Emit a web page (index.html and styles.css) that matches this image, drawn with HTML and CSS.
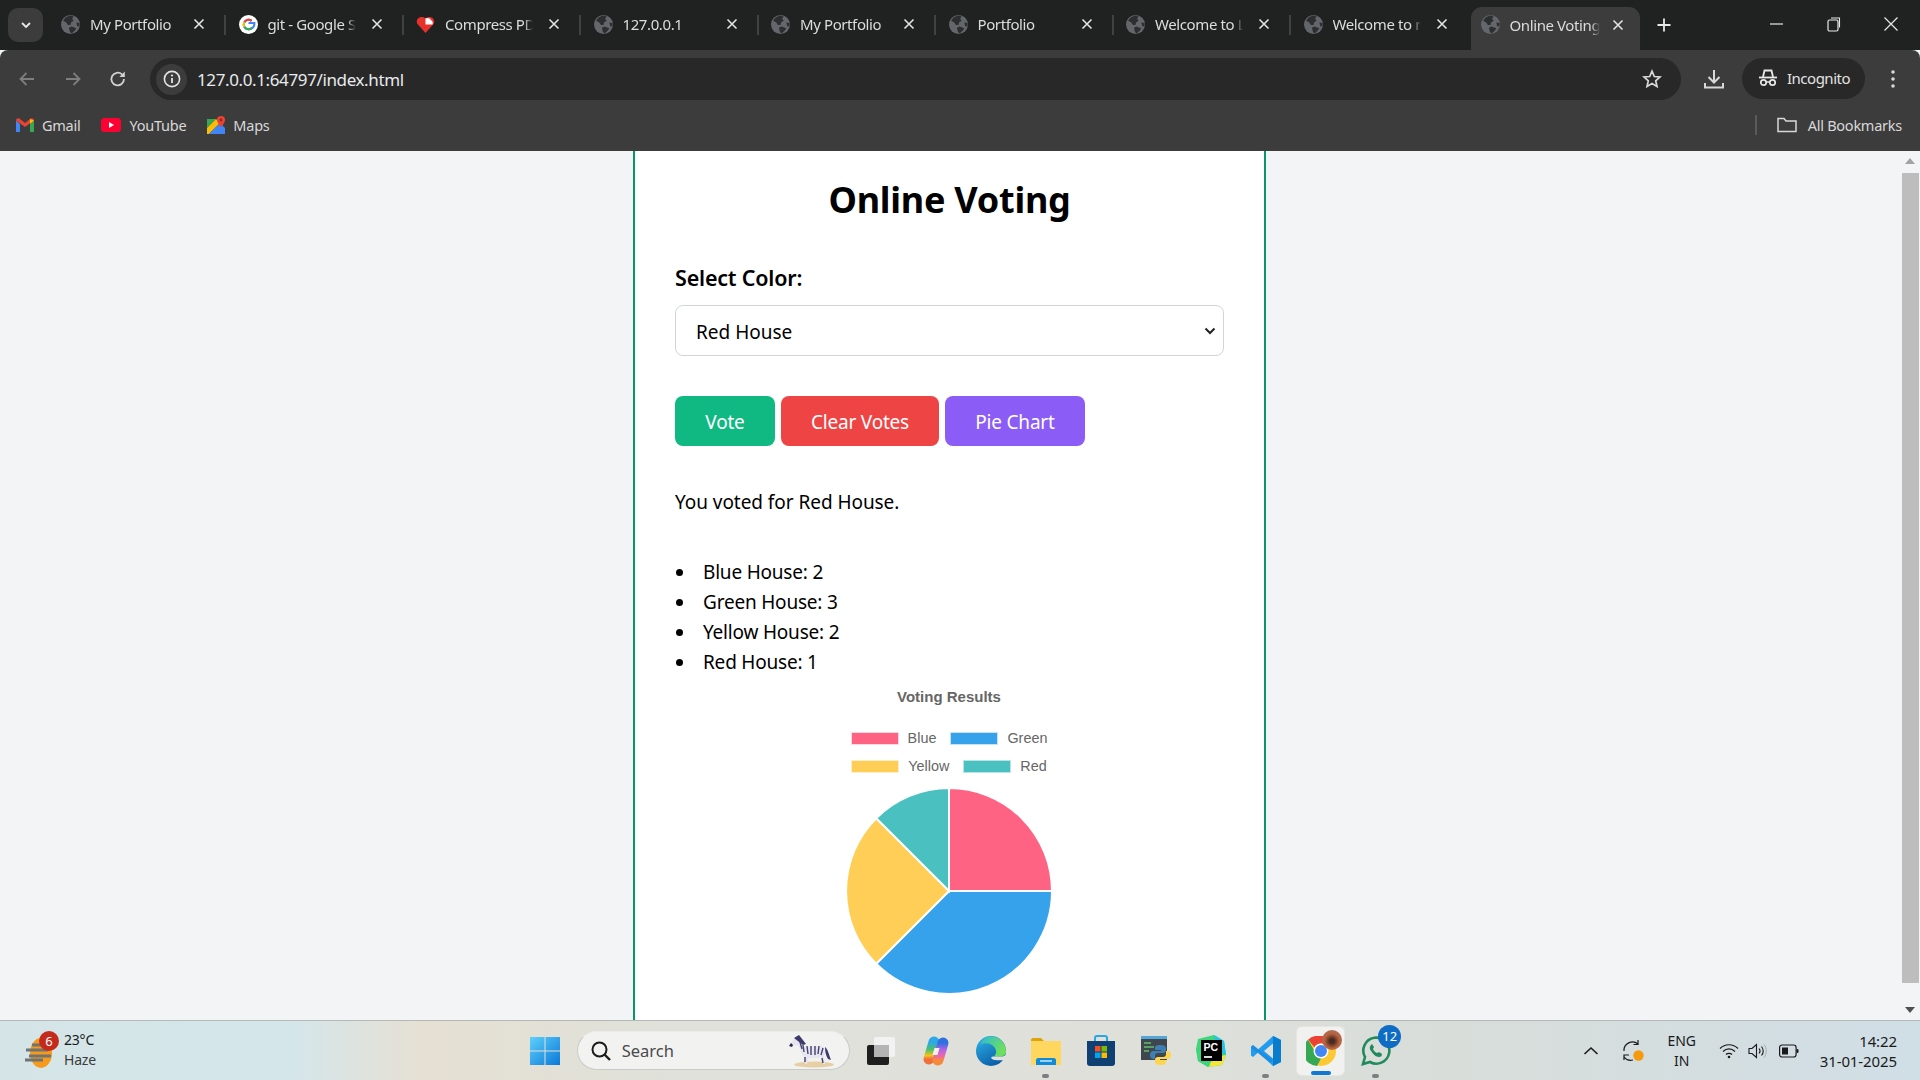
FILE: index.html
```html
<!DOCTYPE html>
<html lang="en">
<head>
  <meta charset="UTF-8" />
  <title>Online Voting</title>
  <link rel="stylesheet" href="styles.css">
</head>
<body>
<svg class="defs" width="0" height="0">
  <symbol id="globe" viewBox="0 0 18 18">
    <circle cx="9" cy="9" r="9" fill="#63666b"/>
    <path d="M9 0.5C6 1 3 3 2 5.5L5 7l1.500 2.500L9 9.500 9.500 7 12 5.500 10.500 3.500 12 1.500ZM10 11l-2.500 1 1 4 1.500 1.500 3-2.500 1.500-2.500ZM14.500 7l3 .5v3l-2 .5Z" fill="#2c2e30"/>
  </symbol>
  <symbol id="close" viewBox="0 0 12 12">
    <path d="M1.500 1.500l9 9M10.500 1.500l-9 9" stroke="#e3e3e3" stroke-width="1.600" fill="none"/>
  </symbol>
</svg>

<!-- tab strip -->
<div class="tabstrip">
  <div class="tabmenu">
    <svg width="12" height="8" viewBox="0 0 12 8"><path d="M2 2l4 4 4-4" stroke="#e8e8e8" stroke-width="1.800" fill="none"/></svg>
  </div>
  <div class="tab">
    <svg class="favicon"><use href="#globe"/></svg><span class="tab-title">My Portfolio</span><svg class="tab-x"><use href="#close"/></svg>
  </div>
  <div class="tab">
    <svg class="favicon" viewBox="0 0 20 20"><circle cx="10" cy="10" r="10" fill="#fff"/><path d="M10 8.500h6.200c.4 3.800-2.200 6.500-6.200 6.500a5 5 0 1 1 3.300-8.800" fill="none" stroke="#4285f4" stroke-width="2.200"/><path d="M5.600 7.400A5 5 0 0 1 13.300 6.200" fill="none" stroke="#ea4335" stroke-width="2.200"/><path d="M5.600 7.400a5 5 0 0 0 0 5.200" fill="none" stroke="#fbbc05" stroke-width="2.200"/><path d="M5.600 12.600A5 5 0 0 0 13.600 13.500" fill="none" stroke="#34a853" stroke-width="2.200"/></svg><span class="tab-title">git - Google Search</span><svg class="tab-x"><use href="#close"/></svg>
  </div>
  <div class="tab">
    <svg class="favicon" viewBox="0 0 20 20"><path d="M10 19L1.500 9.500C-1 5 4 -0.500 10 3.500 16 -0.500 21 5 18.500 9.500Z" fill="#e5322d"/><path d="M10 3.500h4l3.500 3.500v3h-7.500z" fill="#fff"/></svg><span class="tab-title">Compress PDF</span><svg class="tab-x"><use href="#close"/></svg>
  </div>
  <div class="tab">
    <svg class="favicon"><use href="#globe"/></svg><span class="tab-title">127.0.0.1</span><svg class="tab-x"><use href="#close"/></svg>
  </div>
  <div class="tab">
    <svg class="favicon"><use href="#globe"/></svg><span class="tab-title">My Portfolio</span><svg class="tab-x"><use href="#close"/></svg>
  </div>
  <div class="tab">
    <svg class="favicon"><use href="#globe"/></svg><span class="tab-title">Portfolio</span><svg class="tab-x"><use href="#close"/></svg>
  </div>
  <div class="tab">
    <svg class="favicon"><use href="#globe"/></svg><span class="tab-title">Welcome to LMS</span><svg class="tab-x"><use href="#close"/></svg>
  </div>
  <div class="tab tab-last">
    <svg class="favicon"><use href="#globe"/></svg><span class="tab-title">Welcome to my</span><svg class="tab-x"><use href="#close"/></svg>
  </div>
  <div class="tab tab-active">
    <svg class="favicon"><use href="#globe"/></svg><span class="tab-title">Online Voting</span><svg class="tab-x"><use href="#close"/></svg>
  </div>
  <svg class="newtab" width="16" height="16" viewBox="0 0 16 16"><path d="M8 1.500v13M1.500 8h13" stroke="#e8e8e8" stroke-width="1.800"/></svg>
  <div class="winctrls">
    <svg width="16" height="16" viewBox="0 0 16 16"><path d="M1 8h13" stroke="#e8e8e8" stroke-width="1.200"/></svg>
    <svg width="16" height="16" viewBox="0 0 16 16"><rect x="2" y="4" width="10" height="11" rx="1.500" fill="none" stroke="#e8e8e8" stroke-width="1.200"/><path d="M5 2h8.500v9.500" fill="none" stroke="#e8e8e8" stroke-width="1.100"/></svg>
    <svg width="16" height="16" viewBox="0 0 16 16"><path d="M1.500 1.500l13 13M14.500 1.500l-13 13" stroke="#e8e8e8" stroke-width="1.200"/></svg>
  </div>
</div>

<!-- toolbar -->
<div class="toolbar">
  <svg class="nav-btn" width="20" height="20" viewBox="0 0 20 20"><path d="M17 10H4M9.500 4L3.500 10l6 6" stroke="#7e7e7e" stroke-width="1.800" fill="none"/></svg>
  <svg class="nav-btn" width="20" height="20" viewBox="0 0 20 20"><path d="M3 10h13M10.500 4l6 6-6 6" stroke="#7e7e7e" stroke-width="1.800" fill="none"/></svg>
  <svg class="nav-btn" width="20" height="20" viewBox="0 0 20 20"><path d="M16 10a6.300 6.300 0 1 1-2-4.600L16 7.300" stroke="#d0d0d0" stroke-width="1.800" fill="none"/><path d="M16.800 2.500v5.500h-5.500z" fill="#d0d0d0"/></svg>
  <div class="omnibox">
    <div class="site-info">
      <svg width="18" height="18" viewBox="0 0 18 18"><circle cx="9" cy="9" r="7.600" fill="none" stroke="#e3e3e3" stroke-width="1.600"/><path d="M9 8v5" stroke="#e3e3e3" stroke-width="1.800"/><circle cx="9" cy="5.500" r="1.100" fill="#e3e3e3"/></svg>
    </div>
    <span class="url">127.0.0.1:64797/index.html</span>
    <svg class="star" width="20" height="20" viewBox="0 0 20 20"><path d="M10 2.200l2.300 5.300 5.700.5-4.300 3.800 1.300 5.600-5-3-5 3 1.300-5.600L2 8l5.700-.5z" fill="none" stroke="#d8d8d8" stroke-width="1.700"/></svg>
  </div>
  <svg class="download" width="22" height="22" viewBox="0 0 22 22"><path d="M11 2v12M5.500 9l5.500 5.500L16.500 9" stroke="#d8d8d8" stroke-width="2" fill="none"/><path d="M2 15v4.500h18V15" stroke="#d8d8d8" stroke-width="2" fill="none"/></svg>
  <div class="incognito">
    <svg width="20" height="18" viewBox="0 0 20 18"><path d="M5 8l1.500-6.500h7L15 8" fill="none" stroke="#e8e8e8" stroke-width="1.800"/><path d="M1 8.500h18" stroke="#e8e8e8" stroke-width="1.800"/><circle cx="5.500" cy="13.500" r="2.700" fill="none" stroke="#e8e8e8" stroke-width="1.700"/><circle cx="14.500" cy="13.500" r="2.700" fill="none" stroke="#e8e8e8" stroke-width="1.700"/><path d="M8 13h4" stroke="#e8e8e8" stroke-width="1.500"/></svg>
    <span>Incognito</span>
  </div>
  <svg class="kebab" width="6" height="20" viewBox="0 0 6 20"><circle cx="3" cy="3" r="1.800" fill="#d8d8d8"/><circle cx="3" cy="10" r="1.800" fill="#d8d8d8"/><circle cx="3" cy="17" r="1.800" fill="#d8d8d8"/></svg>
</div>

<!-- bookmarks -->
<div class="bookmarks">
  <div class="bookmark">
    <svg width="18" height="14" viewBox="0 0 18 14"><path d="M0 2.500V14h4V6z" fill="#4285f4"/><path d="M14 6v8h4V2.500z" fill="#34a853"/><path d="M0 2.500L9 9l9-6.500C18 .5 15.500-.5 14 1L9 5 4 1C2.500-.5 0 .5 0 2.500z" fill="#ea4335"/><path d="M14 1l4 1.500L14 6z" fill="#fbbc05"/></svg>
    <span>Gmail</span>
  </div>
  <div class="bookmark">
    <svg width="20" height="14" viewBox="0 0 20 14"><rect width="20" height="14" rx="3.500" fill="#ff0033"/><path d="M8 4l5 3-5 3z" fill="#fff"/></svg>
    <span>YouTube</span>
  </div>
  <div class="bookmark">
    <svg width="18" height="18" viewBox="0 0 18 18"><path d="M0 3h9L0 12z" fill="#34a853"/><path d="M0 12L9 3l4 4L2 18H0z" fill="#fbbc05"/><path d="M2 18L13 7l5 5v6z" fill="#4285f4"/><path d="M14 0a4 4 0 0 0-4 4c0 3 4 7 4 7s4-4 4-7a4 4 0 0 0-4-4z" fill="#ea4335"/><circle cx="14" cy="4" r="1.400" fill="#8a2a22"/></svg>
    <span>Maps</span>
  </div>
  <div class="all-bookmarks">
    <svg width="20" height="16" viewBox="0 0 20 16"><path d="M1 14.500V1.500h6l2 2.500h10v10.500z" fill="none" stroke="#d8d8d8" stroke-width="1.500"/></svg>
    <span>All Bookmarks</span>
  </div>
</div>

<!-- page -->
<div class="page">
  <div class="viewport">
    <div class="container">
      <h1>Online Voting</h1>
      <label class="field-label" for="house">Select Color:</label>
      <select id="house" class="house-select">
        <option>Red House</option>
        <option>Blue House</option>
        <option>Green House</option>
        <option>Yellow House</option>
      </select>
      <div class="btn-row">
        <button class="btn btn-vote">Vote</button>
        <button class="btn btn-clear">Clear Votes</button>
        <button class="btn btn-chart">Pie Chart</button>
      </div>
      <p class="message">You voted for Red House.</p>
      <ul class="results">
        <li>Blue House: 2</li>
        <li>Green House: 3</li>
        <li>Yellow House: 2</li>
        <li>Red House: 1</li>
      </ul>
      <div class="chart">
        <div class="chart-title">Voting Results</div>
        <div class="legend-row">
          <span class="swatch swatch-blue"></span><span class="legend-text">Blue</span>
          <span class="swatch swatch-green"></span><span class="legend-text">Green</span>
        </div>
        <div class="legend-row">
          <span class="swatch swatch-yellow"></span><span class="legend-text">Yellow</span>
          <span class="swatch swatch-red"></span><span class="legend-text">Red</span>
        </div>
        <svg class="pie" width="208" height="208" viewBox="-104 -104 208 208">
          <g stroke="#fff" stroke-width="2">
            <path d="M0 0V-103A103 103 0 0 1 103 0Z" fill="#ff6384"/>
            <path d="M0 0H103A103 103 0 0 1 -72.800 72.800Z" fill="#36a2eb"/>
            <path d="M0 0L-72.800 72.800A103 103 0 0 1 -72.800 -72.800Z" fill="#ffce56"/>
            <path d="M0 0L-72.800 -72.800A103 103 0 0 1 0 -103Z" fill="#4bc0c0"/>
          </g>
        </svg>
      </div>
    </div>
  </div>
  <div class="scrollbar">
    <span class="arrow-up"></span>
    <div class="thumb"></div>
    <span class="arrow-down"></span>
  </div>
</div>

<!-- taskbar -->
<div class="taskbar">
  <div class="weather">
    <div class="weather-icon">
      <svg width="32" height="36" viewBox="0 0 32 36"><ellipse cx="17" cy="20" rx="11" ry="15" fill="#f59a1b"/><path d="M8 12h16M2 17h22M5 23h22M1 27h18" stroke="#6f7375" stroke-width="3.200"/></svg>
      <span class="badge">6</span>
    </div>
    <div class="weather-text">
      <div>23°C</div>
      <div class="haze">Haze</div>
    </div>
  </div>

  <div class="task-center">
    <div class="task-item task-start">
      <svg width="30" height="30" viewBox="0 0 30 30"><defs><linearGradient id="win" x1="0" y1="0" x2="1" y2="1"><stop offset="0" stop-color="#5fd0fb"/><stop offset="1" stop-color="#0a78d8"/></linearGradient></defs><path d="M0 1h14.500v13.500H0zM15.500 1H30v13.500H15.500zM0 15.500h14.500V29H0zM15.500 15.500H30V29H15.500z" fill="url(#win)"/></svg>
    </div>
    <div class="searchbox">
      <svg width="22" height="22" viewBox="0 0 22 22"><circle cx="9.500" cy="9.500" r="7" fill="none" stroke="#1c1c1c" stroke-width="2"/><path d="M14.500 14.500l5.500 5.500" stroke="#1c1c1c" stroke-width="2.400"/></svg>
      <span>Search</span>
      <svg class="zebra" width="48" height="36" viewBox="0 0 48 36"><ellipse cx="27" cy="31.500" rx="20" ry="3" fill="#e6cfa4"/><path d="M38 14c3 2 4 8 6 13l-3-1c-2-3-3-7-3-12z" fill="#3c3a6a"/><path d="M17 14l16-1c4 0 5 3 5 6l-1 4 1 8h-2l-2-7-4 1h-8l-2 6h-2l-1-7c-3-3-4-7-5-11l-4-1-3 2-2-2 4-6 4-2 3 2z" fill="#e6e5f0"/><path d="M7 5l5-3 7 9-3 1z" fill="#3c3a6a"/><path d="M2 13l3 1 1-2-2-2z" fill="#2c2a50"/><path d="M13 9l2 7M16 12l1 7M20 13l1 8M24 13v9M28 13v9M32 13l-1 8M36 15l-2 7M18 24v5M35 25l1 5" stroke="#45426e" stroke-width="1.400"/></svg>
    </div>
    <div class="task-item">
      <svg width="30" height="30" viewBox="0 0 30 30"><rect x="1" y="9" width="22" height="20" rx="2" fill="#1f1f1f"/><rect x="8" y="1" width="21" height="20" rx="2" fill="#f4f4f4" fill-opacity=".88"/><rect x="8" y="9" width="15" height="12" fill="#b4b4b4"/></svg>
    </div>
    <div class="task-item">
      <svg width="32" height="32" viewBox="0 0 32 32"><defs><linearGradient id="cop1" x1="0" y1="0" x2="0" y2="1"><stop offset="0" stop-color="#2aa8e8"/><stop offset=".45" stop-color="#4dc16a"/><stop offset=".8" stop-color="#f5c21c"/><stop offset="1" stop-color="#f0703c"/></linearGradient><linearGradient id="cop2" x1="0" y1="0" x2="0" y2="1"><stop offset="0" stop-color="#2f6fe0"/><stop offset=".4" stop-color="#b065e6"/><stop offset=".8" stop-color="#ee6aa0"/><stop offset="1" stop-color="#f58a3c"/></linearGradient></defs><path d="M14 7L9 24" stroke="url(#cop1)" stroke-width="11" stroke-linecap="round" fill="none"/><path d="M18 25L23 8" stroke="url(#cop2)" stroke-width="11" stroke-linecap="round" fill="none"/><path d="M14.500 13h5l-2 7h-5z" fill="#fbeee8"/></svg>
    </div>
    <div class="task-item">
      <svg width="32" height="32" viewBox="0 0 32 32"><defs><linearGradient id="edge1" x1="0" y1="0" x2=".6" y2="1"><stop offset="0" stop-color="#2fb5e8"/><stop offset="1" stop-color="#0a5ea8"/></linearGradient><linearGradient id="edge2" x1="0" y1="0" x2="1" y2=".4"><stop offset="0" stop-color="#2cb8d8"/><stop offset="1" stop-color="#6fe05c"/></linearGradient></defs><circle cx="16" cy="16" r="15" fill="url(#edge1)"/><path d="M12 2A15 15 0 0 1 31 17c0 3-3 4.500-6 4.500h-6c2-2 3-5 1-8.500-3-5-10-6-15-3 1-4 4-7 7-8z" fill="url(#edge2)"/><path d="M32 19c-2 2-4 2.500-7 2.500h-7c-3 0-2 3 2 3.500 4 .5 8 .5 12-1z" fill="#dfe0da"/></svg>
    </div>
    <div class="task-item has-dot">
      <svg width="32" height="30" viewBox="0 0 32 30"><path d="M1 4c0-1 1-2 2-2h8l3 3h-13z" fill="#dfa30a"/><rect x="1" y="5" width="30" height="24" fill="#ffd75e"/><path d="M6 29v-5c0-1 1-2 2-2h16c1 0 2 1 2 2v5z" fill="#0f8bd9"/><path d="M10 25h12" stroke="#cfe9f9" stroke-width="1.500"/></svg>
    </div>
    <div class="task-item">
      <svg width="30" height="32" viewBox="0 0 30 32"><path d="M9 7V3c0-1 1-2 2-2h8c1 0 2 1 2 2v4" fill="none" stroke="#2aa7e0" stroke-width="2"/><path d="M1 6h28v22c0 2-1 3-3 3H4c-2 0-3-1-3-3z" fill="#103f73"/><rect x="9" y="11" width="5.500" height="5.500" fill="#f25022"/><rect x="15.500" y="11" width="5.500" height="5.500" fill="#7fba00"/><rect x="9" y="17.500" width="5.500" height="5.500" fill="#00a4ef"/><rect x="15.500" y="17.500" width="5.500" height="5.500" fill="#ffb900"/></svg>
    </div>
    <div class="task-item">
      <svg width="30" height="30" viewBox="0 0 30 30"><rect x="0" y="0" width="26" height="24" fill="#40464d"/><rect x="0" y="0" width="26" height="3" fill="#52a6d8"/><path d="M3 7h7M3 11h10M3 15h5" stroke="#5fc06b" stroke-width="1.300"/><path d="M19 9c-4 0-5 1-5 3v2h6v1h-8c-2 0-3 2-3 4s1 4 3 4h2v-3c0-2 1-3 3-3h5c2 0 3-1 3-3v-2c0-2-2-3-6-3z" fill="#3d7eb3"/><path d="M20 29c4 0 5-1 5-3v-2h-6v-1h8c2 0 3-2 3-4s-1-4-3-4h-2v3c0 2-1 3-3 3h-5c-2 0-3 1-3 3v2c0 2 2 3 6 3z" fill="#fdd64f"/></svg>
    </div>
    <div class="task-item">
      <svg width="30" height="32" viewBox="0 0 30 32"><path d="M2 4L18 0l10 6 2 14-4 10-14 2L2 26 0 14z" fill="#3ed67a"/><path d="M18 0l10 6 2 14-8-4z" fill="#20c4e8"/><path d="M30 20l-4 10-14 2 6-10z" fill="#f5e73a"/><path d="M0 14l8-8 6 24-2 2-10-6z" fill="#3ed67a"/><rect x="5" y="5" width="21" height="21" fill="#000"/><text x="7.500" y="16" class="pc-text">PC</text><path d="M8 22h8" stroke="#fff" stroke-width="1.700"/></svg>
    </div>
    <div class="task-item has-dot">
      <svg width="30" height="30" viewBox="0 0 30 30"><path d="M22 0l8 4v22l-8 4L7 16.500 2 21l-2-1.500V10.500L2 9l5 4.500z" fill="#1f9cf0"/><path d="M22 7.500L13 15l9 7.500z" fill="#e0e1dc"/><path d="M22 0l8 4v22l-8 4z" fill="#0a7ccd"/><path d="M2 9l20 15-2 3L0 12z" fill="#1a86d6" fill-opacity=".6"/></svg>
    </div>
    <div class="task-item task-active">
      <svg width="30" height="30" viewBox="0 0 30 30"><circle cx="15" cy="15" r="15" fill="#fcc934"/><path d="M15 0a15 15 0 0 1 13 7.500H15A7.500 7.500 0 0 0 8.500 11.250L2 3.800A15 15 0 0 1 15 0z" fill="#ea4335"/><path d="M2 3.800l6.500 11.200A7.500 7.500 0 0 0 15 22.500L11 30A15 15 0 0 1 2 3.800z" fill="#34a853"/><circle cx="15" cy="15" r="7.500" fill="#fff"/><circle cx="15" cy="15" r="6" fill="#4285f4"/></svg>
      <span class="avatar"></span>
    </div>
    <div class="task-item has-dot">
      <svg width="30" height="30" viewBox="0 0 30 30"><path d="M2 28l2-7A13 13 0 1 1 9 26z" fill="none" stroke="#1f8a5b" stroke-width="2.600"/><path d="M10 9c-1 1-2 3 0 6 2 3 5 6 8 6 2 0 3-1 3-3l-3-2-2 1c-2-1-3-2-4-4l1-2-2-3z" fill="#1f8a5b"/></svg>
      <span class="count">12</span>
    </div>
  </div>

  <div class="tray">
    <svg class="tray-chevron" width="16" height="10" viewBox="0 0 16 10"><path d="M1.500 8L8 2l6.500 6" fill="none" stroke="#1a1a1a" stroke-width="1.600"/></svg>
    <svg class="tray-sync" width="22" height="22" viewBox="0 0 22 22"><path d="M1 11A8.500 8.500 0 0 1 15 4M1 17a8.500 8.500 0 0 0 9 3" fill="none" stroke="#1a1a1a" stroke-width="1.200"/><path d="M15 0v4.500h-4.500M1 20v-5h5" fill="none" stroke="#1a1a1a" stroke-width="1.200"/><circle cx="15.500" cy="15.500" r="5.200" fill="#f59a0c"/></svg>
    <div class="lang">ENG<br>IN</div>
    <svg class="tray-wifi" width="20" height="16" viewBox="0 0 20 16"><path d="M1 5.500c5-5 13-5 18 0M4 8.500c3.500-3.500 8.500-3.500 12 0M7 11.500c1.500-1.500 4.500-1.500 6 0" fill="none" stroke="#1a1a1a" stroke-width="1.200"/><circle cx="10" cy="14" r="1.300" fill="#1a1a1a"/></svg>
    <svg class="tray-sound" width="20" height="16" viewBox="0 0 20 16"><path d="M1 5.500v5h3l4.500 4V1.500L4 5.500z" fill="none" stroke="#1a1a1a" stroke-width="1.100"/><path d="M11 5.500c1.300 1.500 1.300 3.500 0 5M13.500 3.500c2.300 2.500 2.300 6.500 0 9" fill="none" stroke="#1a1a1a" stroke-width="1.100"/><path d="M16 1.500c3 3.500 3 9.500 0 13" fill="none" stroke="#a8acae" stroke-width="1"/></svg>
    <svg class="tray-battery" width="20" height="14" viewBox="0 0 20 14"><rect x=".6" y="1" width="16.500" height="12" rx="2.500" fill="none" stroke="#1a1a1a" stroke-width="1.200"/><rect x="3" y="3.500" width="6" height="7" fill="#1a1a1a"/><rect x="17.500" y="5" width="2" height="4" rx="1" fill="#1a1a1a"/></svg>
    <div class="clock">14:22<br>31-01-2025</div>
  </div>
</div>
</body>
</html>
```

FILE: styles.css
```css
* { box-sizing: border-box; }
html, body { margin: 0; padding: 0; height: 100%; overflow: hidden; }
body { width: 1920px; height: 1080px; display: flex; flex-direction: column; font-family: "Noto Sans", "Open Sans", sans-serif; background: #f3f4f6; }
.defs { position: absolute; }

/* tab strip */
.tabstrip { height: 50px; background: #202222; display: flex; align-items: flex-end; padding-left: 8px; flex-shrink: 0; }
.tabmenu { width: 35px; height: 34px; margin: 0 5.500px 8px 0; background: #3c3c3c; border-radius: 10px; display: flex; align-items: center; justify-content: center; }
.tab { width: 177.500px; height: 50px; padding: 0 16px 2px 12.500px; display: flex; align-items: center; color: #dcdcdc; font-size: 15px; position: relative; }
.tab::after { content: ""; position: absolute; right: 0; top: 15px; height: 20px; width: 2px; background: #3f4142; }
.tab-last::after { display: none; }
.favicon { width: 19px; height: 19px; flex-shrink: 0; }
.tab-title { width: 88px; margin-left: 10px; white-space: nowrap; overflow: hidden; -webkit-mask-image: linear-gradient(to right, #000 90%, transparent 100%); mask-image: linear-gradient(to right, #000 90%, transparent 100%); letter-spacing: -0.4px; }
.tab-x { width: 12px; height: 12px; margin-left: 15px; flex-shrink: 0; }
.tab-active { width: 169px; height: 43px; margin-left: 2px; padding: 0 9px 8px 10px; background: #3c3c3c; border-radius: 11px 11px 0 0; }
.tab-active::after { display: none; }
.tab-active .tab-title { width: 90px; }
.tab-active .tab-x { margin-left: 12px; }
.newtab { margin: 0 0 17px 16px; }
.winctrls { margin-left: auto; display: flex; gap: 41px; padding-right: 21px; align-self: flex-start; margin-top: 16px; }

/* toolbar */
.toolbar { height: 50px; background: #3c3c3c; border-radius: 8px 8px 0 0; display: flex; align-items: flex-start; padding: 8px 0 0 17px; flex-shrink: 0; }
.nav-btn { margin: 11px 25.500px 0 0; }
.nav-btn:nth-child(3) { margin-right: 22px; }
.omnibox { width: 1531px; height: 42px; background: #282828; border-radius: 21px; display: flex; align-items: center; padding: 0 19px 0 6px; }
.site-info { width: 31px; height: 31px; border-radius: 50%; background: #3c3c3c; display: flex; align-items: center; justify-content: center; margin-right: 10px; }
.url { color: #e8eaed; font-size: 17px; letter-spacing: -0.38px; }
.star { margin-left: auto; }
.download { margin: 10px 17px 0 22px; }
.incognito { width: 123px; height: 41px; background: #282828; border-radius: 21px; display: flex; align-items: center; gap: 9px; padding: 0 0 1px 16px; color: #e3e3e3; font-size: 15px; letter-spacing: -0.5px; }
.kebab { margin: 11px 0 0 25px; }

/* bookmarks */
.bookmarks { height: 51px; background: #3c3c3c; display: flex; align-items: center; padding: 0 18px 2px 16px; color: #d8d8d8; font-size: 14.500px; letter-spacing: -0.25px; flex-shrink: 0; }
.bookmark { display: flex; align-items: center; gap: 8px; margin-right: 21px; }
.all-bookmarks { margin-left: auto; display: flex; align-items: center; gap: 11px; border-left: 2px solid #5a5a5a; padding-left: 20px; height: 20px; }

/* page */
.page { flex: 1; display: flex; min-height: 0; }
.viewport { flex: 1; overflow: hidden; display: flex; justify-content: center; }
.container { width: 633px; margin-right: 1px; background: #fff; border-left: 2px solid #059669; border-right: 2px solid #059669; padding: 21px 40px 0; color: #000; }
h1 { margin: 0; text-align: center; font-size: 36px; line-height: 56px; font-weight: 700; letter-spacing: -0.25px; }
.field-label { display: block; margin-top: 35px; font-size: 21.500px; line-height: 30px; font-weight: 600; letter-spacing: -0.2px; }
.house-select { display: block; width: 100%; height: 51px; margin-top: 12px; padding: 2px 20px 0; border: 1px solid #d1d5db; border-radius: 8px; font-family: inherit; font-size: 19px; color: #000; appearance: none; background: #fff url("data:image/svg+xml,%3Csvg xmlns='http://www.w3.org/2000/svg' width='12' height='8'%3E%3Cpath d='M1.500 1.500L6 6l4.500-4.500' fill='none' stroke='%23222' stroke-width='2'/%3E%3C/svg%3E") no-repeat right 7px center; }
.btn-row { display: flex; gap: 6px; margin-top: 40px; }
.btn { height: 50px; padding: 2px 0 0; border: 0; border-radius: 8px; color: #fff; font-family: inherit; font-size: 19px; letter-spacing: -0.2px; }
.btn-vote { width: 100px; background: #10b981; }
.btn-clear { width: 158px; background: #ef4444; }
.btn-chart { width: 140px; background: #8b5cf6; }
.message { margin: 41px 0 0; font-size: 19px; line-height: 30px; letter-spacing: -0.05px; }
.results { margin: 40px 0 0; padding: 0; list-style: none; font-size: 19px; line-height: 30px; letter-spacing: -0.2px; }
.results li { display: flex; align-items: center; }
.results li::before { content: ""; width: 7px; height: 7px; margin: 0 20px 0 1px; border-radius: 50%; background: #000; }

/* chart */
.chart { display: flex; flex-direction: column; align-items: center; font-family: "Liberation Sans", Arial, sans-serif; color: #666; font-size: 14.400px; margin-top: 10px; padding-right: 1px; }
.chart-title { font-size: 15px; font-weight: 700; line-height: 20px; margin-bottom: 17px; }
.legend-row { display: flex; align-items: center; height: 28px; }
.swatch { width: 48px; height: 13px; margin-right: 9px; border: 1px solid; }
.legend-text { margin-right: 14px; }
.legend-text:last-child { margin-right: 0; }
.swatch-blue { background: #ff6384; border-color: #ffd8e0; }
.swatch-green { background: #36a2eb; border-color: #c6e3f8; }
.swatch-yellow { background: #ffce56; border-color: #ffefc8; }
.swatch-red { background: #4bc0c0; border-color: #b8e6e6; }
.pie { margin-top: 7px; flex-shrink: 0; }

/* scrollbar */
.scrollbar { width: 20px; background: #f3f4f6; display: flex; flex-direction: column; align-items: center; flex-shrink: 0; padding: 7px 0; }
.arrow-up { border: 5px solid transparent; border-top: 0; border-bottom: 6px solid #a3a3a3; }
.thumb { width: 17px; height: 810px; background: #bdbdbd; margin: 9px 0 auto; }
.arrow-down { border: 5px solid transparent; border-bottom: 0; border-top: 6px solid #505050; }

/* taskbar */
.taskbar { height: 60px; flex-shrink: 0; border-top: 1px solid #b4b8b6; background: linear-gradient(90deg, #d5e5e7 0%, #d4e6ea 15%, #e6e0d3 22%, #dfe1da 35%, #dfe0da 60%, #d8ddd9 75%, #d0dee6 100%); display: grid; grid-template-columns: 1fr auto 1fr; align-items: center; color: #1a1a1a; font-size: 14px; }
.weather { display: flex; align-items: center; padding-left: 24px; gap: 8px; }
.weather-icon { position: relative; width: 32px; height: 36px; }
.badge { position: absolute; left: 15px; top: -2px; width: 20px; height: 20px; border-radius: 50%; background: #c42b1c; color: #fff; font-size: 13px; line-height: 20px; text-align: center; }
.weather-text { line-height: 20px; letter-spacing: -0.2px; margin-top: -2px; }
.haze { color: #3c3c3c; }
.task-center { display: flex; align-items: center; height: 59px; }
.task-item { width: 55px; height: 48px; display: flex; align-items: center; justify-content: center; position: relative; }
.task-start svg { margin-left: 2px; }
.has-dot::after { content: ""; position: absolute; bottom: -3px; left: 24px; width: 7px; height: 4px; border-radius: 2px; background: #7c7f7f; }
.task-active { width: 47px; margin: 0 4px; background: #f1f1ef; border-radius: 5px; box-shadow: 0 0 0 1px #e6e6e3; }
.task-active::after { content: ""; position: absolute; bottom: 0; left: 14px; width: 20px; height: 4px; border-radius: 2px; background: #0f78d4; }
.avatar { position: absolute; top: 3px; right: 2px; width: 20px; height: 20px; border-radius: 50%; background: radial-gradient(circle at 50% 55%, #4a2a1e 15%, #b8623e 50%, #9a7a6c 100%); }
.count { position: absolute; top: -2px; right: 2px; width: 23px; height: 23px; border-radius: 50%; background: #0f6cc4; color: #fff; font-size: 13px; line-height: 23px; text-align: center; }
.searchbox { width: 273px; height: 39px; margin: 0 3.500px 0 5px; background: #f2f3f1; border: 1px solid #c8ccc8; border-top-color: #ececea; border-radius: 20px; display: flex; align-items: center; padding: 0 14px 0 12px; gap: 10px; font-size: 16.500px; color: #4a4a4a; }
.zebra { margin-left: auto; }
.pc-text { font: 700 10.500px "Liberation Sans", sans-serif; fill: #fff; }
.tray { display: flex; align-items: center; justify-self: end; padding-right: 23px; }
.tray-chevron { margin-right: 24px; }
.tray-sync { margin-right: 19px; }
.lang { width: 36px; text-align: center; line-height: 20px; letter-spacing: -0.1px; margin-right: 19px; }
.tray-wifi { margin-right: 9px; }
.tray-sound { margin-right: 11px; }
.tray-battery { margin-right: 21px; }
.clock { text-align: right; line-height: 20px; font-size: 15px; letter-spacing: -0.1px; }
```
